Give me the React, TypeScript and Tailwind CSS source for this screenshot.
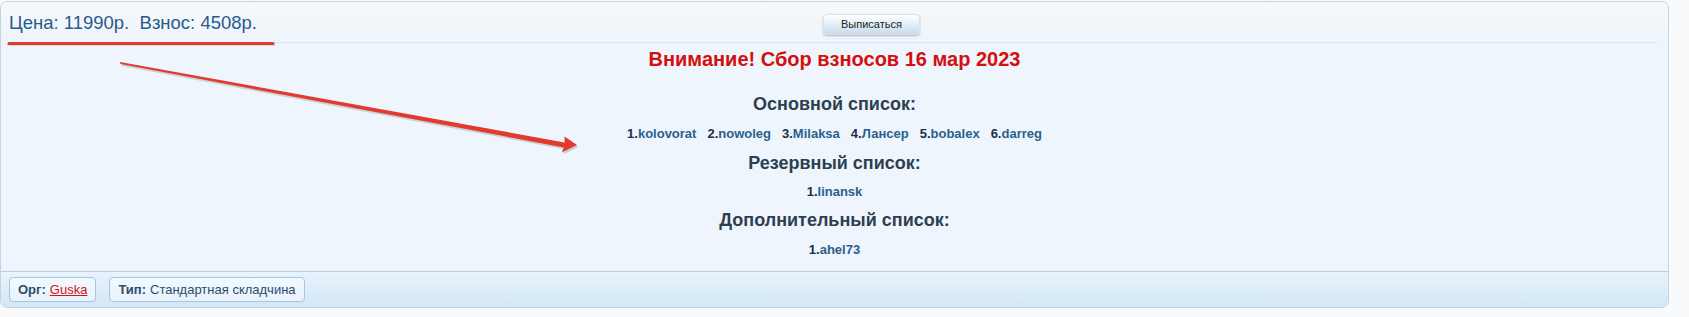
import React from "react";

const main = ["kolovorat", "nowoleg", "Milaksa", "Лансер", "bobalex", "darreg"];
const reserve = ["linansk"];
const extra = ["ahel73"];

function Members({ names }: { names: string[] }) {
  return (
    <div className="flex justify-center gap-[11px] text-[13px] leading-[16px] font-bold">
      {names.map((name, i) => (
        <span key={i}>
          <span className="text-[#1f2f45]">{i + 1}.</span>
          <span className="text-[#2b5f8e]">{name}</span>
        </span>
      ))}
    </div>
  );
}

function Tag({ label, children }: { label: string; children: React.ReactNode }) {
  return (
    <div className="flex h-[25px] items-center rounded-[4px] border border-[#a9c6de] bg-gradient-to-b from-[#f3f9fe] to-[#e8f2fb] px-[8px] text-[13px] text-[#2e4d6e]">
      <span className="mr-[4px] font-bold">{label}</span>
      {children}
    </div>
  );
}

export default function App() {
  return (
    <div
      className="relative h-[317px] w-[1689px] bg-[#f9fafc] pt-[1px]"
      style={{ fontFamily: '"Liberation Sans", Arial, sans-serif' }}
    >
      <div className="w-[1669px] overflow-hidden rounded-[7px] border border-[#c6d4e1] bg-[#eef5fc]">
        <div className="bg-gradient-to-b from-[#f7f9fb] to-[#edf4fb] px-[8px] pr-[10px]">
          <div className="flex h-[41px] items-start border-b border-[#d5e6f5] pt-[10px]">
            <span className="w-[814px] text-[18.5px] leading-[22px] text-[#2a5a8c]">
              Цена: 11990р.&nbsp;&nbsp;Взнос: 4508р.
            </span>
            <button className="mt-[2px] h-[21px] w-[97px] rounded-[4px] border border-[#d6e3ee] bg-gradient-to-b from-[#ffffff] to-[#c5dced] text-[11px] text-[#222] shadow-[0_1px_2px_rgba(0,0,0,0.25)]">
              Выписаться
            </button>
          </div>
        </div>

        <div className="flex h-[228px] flex-col items-center pt-[5px]">
          <div className="text-[20px] leading-[23px] font-bold text-[#d40f0f]">
            Внимание! Сбор взносов 16 мар 2023
          </div>
          <div className="mt-[23px] text-[18px] leading-[21px] font-bold text-[#2c3e50]">
            Основной список:
          </div>
          <div className="mt-[11px]">
            <Members names={main} />
          </div>
          <div className="mt-[11px] text-[18px] leading-[21px] font-bold text-[#2c3e50]">
            Резервный список:
          </div>
          <div className="mt-[10px]">
            <Members names={reserve} />
          </div>
          <div className="mt-[10px] text-[18px] leading-[21px] font-bold text-[#2c3e50]">
            Дополнительный список:
          </div>
          <div className="mt-[11px]">
            <Members names={extra} />
          </div>
        </div>

        <div className="flex h-[36px] items-center gap-[13px] border-t border-[#b9cfe2] bg-gradient-to-b from-[#e8f3fc] to-[#d2e7f7] px-[8px]">
          <Tag label="Орг:">
            <span className="text-[#d51414] underline">Guska</span>
          </Tag>
          <Tag label="Тип:">
            <span>Стандартная складчина</span>
          </Tag>
        </div>
      </div>

      <svg
        className="pointer-events-none absolute top-0 left-0"
        width="1689"
        height="317"
        viewBox="0 0 1689 317"
      >
        <line x1="9" y1="44.5" x2="274" y2="44.5" stroke="#b9c2ca" strokeWidth="3" strokeLinecap="round" opacity="0.5" />
        <line x1="9" y1="43.5" x2="273" y2="43.5" stroke="#e3382c" strokeWidth="3" strokeLinecap="round" />
        <g transform="translate(1.5 2)" opacity="0.35">
          <polygon points="120,62 120.4,64 563.8,147.5 561.8,152.5 577,145 564.6,136.6 564.6,142.5" fill="#8a8f96" />
        </g>
        <polygon points="120,62 120.4,64 563.8,147.5 561.8,152.5 577,145 564.6,136.6 564.6,142.5" fill="#e23b2e" />
      </svg>
    </div>
  );
}
